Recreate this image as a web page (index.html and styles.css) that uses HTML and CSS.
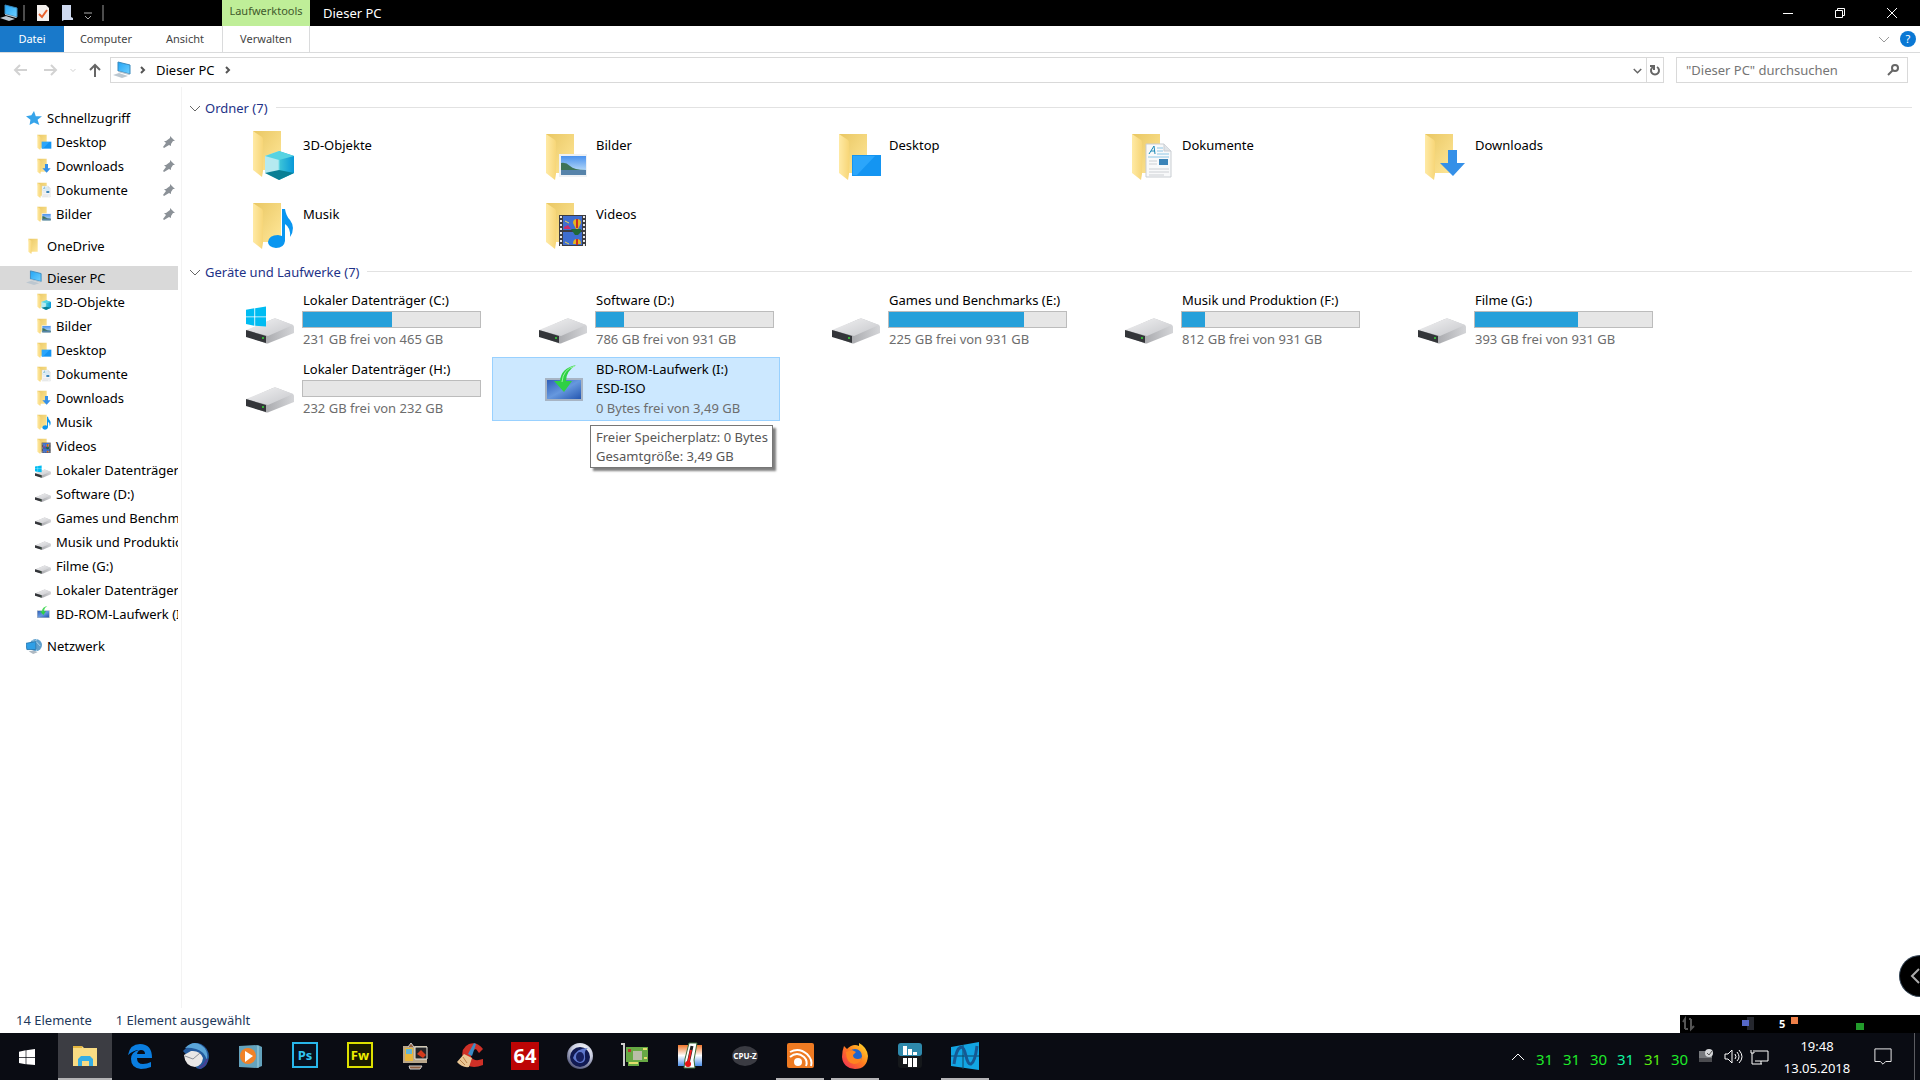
FILE: index.html
```
<!DOCTYPE html>
<html lang="de">
<head>
    <meta charset="UTF-8">
    <meta name="viewport" content="width=device-width, initial-scale=1.0">
    <title>Dieser PC</title>
    <link rel="stylesheet" href="styles.css">
</head>
<body>
    <!-- Shared icons -->
    <svg class="sprite" aria-hidden="true">
        <defs>
            <linearGradient id="gFolder" x1="0" y1="0" x2="1" y2="1">
                <stop offset="0" stop-color="#e9c763"/><stop offset="1" stop-color="#ffe799"/>
            </linearGradient>
            <linearGradient id="gFlap" x1="0" y1="0" x2="1" y2="0">
                <stop offset="0" stop-color="#ffeaa5"/><stop offset="1" stop-color="#f7d678"/>
            </linearGradient>
            <linearGradient id="gScreen" x1="0" y1="0" x2="1" y2="1">
                <stop offset="0" stop-color="#22a4f5"/><stop offset="1" stop-color="#6fd0ff"/>
            </linearGradient>
            <linearGradient id="gDrive" x1="0" y1="0" x2="1" y2="1">
                <stop offset="0" stop-color="#f2f2f3"/><stop offset="1" stop-color="#c6c7cb"/>
            </linearGradient>
            <linearGradient id="gSide" x1="0" y1="0" x2="1" y2="0">
                <stop offset="0" stop-color="#8c8d91"/><stop offset="1" stop-color="#d4d5d8"/>
            </linearGradient>
            <linearGradient id="gCube" x1="0" y1="0" x2="1" y2="0">
                <stop offset="0" stop-color="#3fc6d8"/><stop offset="1" stop-color="#0898d8"/>
            </linearGradient>
            <linearGradient id="gSky" x1="0" y1="0" x2="0" y2="1">
                <stop offset="0" stop-color="#4a92ee"/><stop offset="1" stop-color="#d3ecfb"/>
            </linearGradient>
            <linearGradient id="gBlue" x1="0" y1="0" x2="1" y2="1">
                <stop offset="0" stop-color="#2f5fb8"/><stop offset="0.5" stop-color="#6698de"/><stop offset="1" stop-color="#2456b0"/>
            </linearGradient>
            <linearGradient id="gFire" x1="0" y1="1" x2="1" y2="0">
                <stop offset="0" stop-color="#f0255c"/><stop offset="0.5" stop-color="#ff7a1f"/><stop offset="1" stop-color="#ffe52a"/>
            </linearGradient>
            <linearGradient id="gTemp" x1="0" y1="0" x2="0" y2="1">
                <stop offset="0" stop-color="#f0752a"/><stop offset="0.5" stop-color="#fff"/><stop offset="1" stop-color="#4a8ee8"/>
            </linearGradient>
            <radialGradient id="gOrb" cx="0.6" cy="0.3" r="0.8">
                <stop offset="0" stop-color="#fff"/><stop offset="0.5" stop-color="#c9cde0"/><stop offset="1" stop-color="#30355c"/>
            </radialGradient>
        </defs>

        <symbol id="folder" viewBox="0 0 48 48">
            <path d="M7 2h28v39H15z" fill="url(#gFolder)"/>
            <path d="M7 2l9 6q1 1 1 3v31l-1 6-9-7z" fill="url(#gFlap)"/>
        </symbol>
        <symbol id="objects" viewBox="0 0 48 48">
            <use href="#folder" y="-3" width="48" height="48"/>
            <path d="M19 24l14-5v29l-14-7z" fill="#b5eaf0"/>
            <path d="M33 19l15 5v17l-15 7z" fill="url(#gCube)"/>
            <path d="M19 24l14-5 15 5-15 4z" fill="#56d3e2"/>
            <path d="M19 41l14-3 15 3-15 7z" fill="#087f95"/>
            <path d="M33 28v10" stroke="#7ae0ea"/>
        </symbol>
        <symbol id="pictures" viewBox="0 0 48 48">
            <use href="#folder"/>
            <path d="M20 22h28v23H20z" fill="#eef1f4"/>
            <path d="M22 24h25v19H22z" fill="url(#gSky)"/>
            <path d="M22 31q5-1 9 3t16 4v5H22z" fill="#3d7358"/>
            <path d="M22 38h25v5H22z" fill="#5683aa"/>
        </symbol>
        <symbol id="desktop" viewBox="0 0 48 48">
            <use href="#folder"/>
            <path d="M20 23h29v21H20z" fill="#1495f2"/>
            <path d="M21 24h22L25 43h-4z" fill="#2ba6fb"/>
        </symbol>
        <symbol id="documents" viewBox="0 0 48 48">
            <use href="#folder"/>
            <path d="M21 12h18l7 7v26H21z" fill="#f8f9fa" stroke="#c9cdd2"/>
            <path d="M39 12v7h7" fill="#e0e4e8" stroke="#c9cdd2"/>
            <path d="M24 22l5-8 1 8m-4-3h4" fill="none" stroke="#1c8ab8"/>
            <path d="M32 16h6m-6 3h6m-6 3h12m-21 3h21" stroke="#8cc6e6"/>
            <path d="M24 29h8m-8 3h8m-8 5h20m-20 3h20m-20 3h15" stroke="#cdd0d4"/>
            <path d="M34 27h9v6h-9z" fill="#3b84b8"/>
        </symbol>
        <symbol id="downloads" viewBox="0 0 48 48">
            <use href="#folder"/>
            <path d="M30 18h9v13h8L35 44 22 31h8z" fill="#3590e8"/>
        </symbol>
        <symbol id="music" viewBox="0 0 48 48">
            <use href="#folder"/>
            <path d="M36 8h3q1 7 5 11 6 8 0 17 1-9-5-13v17q-1 7-9 7-8-1-8-6 1-7 10-7l4 1z" fill="#0a96f0"/>
        </symbol>
        <symbol id="videos" viewBox="0 0 48 48">
            <use href="#folder"/>
            <path d="M20 14h27v31H20z" fill="#3c3c42"/>
            <path d="M24 15h19v14H24zm0 16h19v13H24z" fill="#3f6ed0"/>
            <path d="M22 15v30M45 15v30" stroke="#e8e8e8" stroke-width="2" stroke-dasharray="2 2"/>
            <path d="M34 22q0-4 4-4t4 4l-3 6h-2zM34 43q0-5 4-5t4 5z" fill="#e3b41e"/>
            <path d="M37 18h2v9h-2zM37 38h2v6h-2z" fill="#cc2d1f"/>
            <path d="M25 26l4-2 3 4h-7z" fill="#c92f6c"/><path d="M26 20l4 2m-4 19l4 2" stroke="#efd44c"/>
            <path d="M32 28h10v3l-3 3h-3z" fill="#206836"/>
        </symbol>
        <symbol id="drive" viewBox="0 0 48 48">
            <path d="M0 35l27-12q2-1 4 0l16 6q1 1 1 2v6L23 47q-2 1-4 0L0 40z" fill="url(#gSide)"/>
            <path d="M0 34l27-11q2-1 4 0l16 6-25 11z" fill="url(#gDrive)"/>
            <path d="M0 34l20 6v7L0 41z" fill="#333539"/>
            <circle cx="17" cy="42" r="1" fill="#37dc37"/>
        </symbol>
        <symbol id="winlogo" viewBox="0 0 24 24">
            <path d="M0 4l10-2v10H0zM11 2l13-2v12H11zM0 13h10v10L0 21zM11 13h13v11l-13-1z"/>
        </symbol>
        <symbol id="system" viewBox="0 0 48 48">
            <use href="#drive"/>
            <use href="#winlogo" x="0" y="9" width="20" height="23" fill="#00bcf2"/>
        </symbol>
        <symbol id="disc" viewBox="0 0 48 48">
            <path d="M6 13h38v23H6z" fill="#a7b4c4"/>
            <path d="M8 15h34v19H8z" fill="url(#gBlue)"/>
            <path d="M37 0Q22 3 21 16h-6l10 11 8-11h-6Q27 6 37 0z" fill="#2fd044"/>
            <path d="M36 1Q24 4 23 17" fill="none" stroke="#9bf5a0"/>
        </symbol>
        <symbol id="pc" viewBox="0 0 18 18">
            <path d="M5 1l12 3v9L5 10z" fill="url(#gScreen)" stroke="#3989bd"/>
            <path d="M5 10l12 3-1 1-11-3zM0 14l6-2 9 3-6 2z" fill="#bcc7d0"/>
        </symbol>
        <symbol id="star" viewBox="0 0 18 18">
            <path d="M9 1l2 6 7 0-5 4 2 6-6-3-5 3 1-6-5-4 6-1z" fill="#36a4ea"/>
        </symbol>
        <symbol id="pin" viewBox="0 0 12 12">
            <path d="M7 0l5 5-2 0-2 3v2L6 9 1 12 0 11l3-4-2-2h2l4-3z" fill="#8b9197"/>
        </symbol>
        <symbol id="network" viewBox="0 0 18 18">
            <circle cx="11" cy="8" r="7" fill="#5f9fcc"/>
            <path d="M7 3q5 0 9 6M12 1q-4 7 0 14" stroke="#b7dbef" fill="none"/>
            <path d="M0 6l11-2v9L1 13z" fill="#2f9fe6" stroke="#2779b0"/>
            <path d="M3 15l5 3 5-2-4-2z" fill="#aeb9c2"/>
        </symbol>
        <symbol id="down" viewBox="0 0 12 12"><path d="M1 4l5 5 5-5"/></symbol>
        <symbol id="right" viewBox="0 0 12 12"><path d="M4 3l3 3-3 3"/></symbol>
    </svg>

    <header class="titlebar">
        <div class="quick-access">
            <svg class="icon-pc"><use href="#pc"/></svg>
            <i class="separator"></i>
            <button class="quick-button" aria-label="Eigenschaften">
                <svg viewBox="0 0 12 16"><path d="M0 0h9l3 3v13H0z" fill="#f4f0ee"/><path d="M2 9l3 3 5-7" fill="none" stroke="#e8602c" stroke-width="2"/></svg>
            </button>
            <button class="quick-button" aria-label="Neuer Ordner">
                <svg viewBox="0 0 12 16"><path d="M1 0h9v12l2 1v2H3l-2 1z" fill="#cfdaf0"/></svg>
            </button>
            <button class="quick-button customize" aria-label="Anpassen">
                <svg class="line" viewBox="0 0 12 16"><path d="M2 8h8M3 11l3 3 3-3"/></svg>
            </button>
            <i class="separator"></i>
        </div>
        <div class="tool-tab">Laufwerktools</div>
        <h1 class="window-title">Dieser PC</h1>
        <div class="window-controls">
            <button aria-label="Minimieren"><svg class="line" viewBox="0 0 12 12"><path d="M1 6.500h10"/></svg></button>
            <button aria-label="Verkleinern"><svg class="line" viewBox="0 0 12 12"><path d="M1.500 3.500h7v7h-7zM3.500 3V1.500h7v7H9"/></svg></button>
            <button aria-label="Schließen"><svg class="line" viewBox="0 0 12 12"><path d="M1 1l10 10M11 1L1 11"/></svg></button>
        </div>
    </header>

    <nav class="ribbon">
        <button class="tab file-tab">Datei</button>
        <button class="tab computer-tab">Computer</button>
        <button class="tab view-tab">Ansicht</button>
        <button class="tab manage-tab">Verwalten</button>
        <button class="ribbon-toggle" aria-label="Menüband erweitern"><svg class="line"><use href="#down"/></svg></button>
        <button class="help" aria-label="Hilfe">?</button>
    </nav>

    <div class="address-row">
        <button class="nav-button disabled" aria-label="Zurück"><svg class="line" viewBox="0 0 14 14"><path d="M13 7H2M6 2L1 7l5 5"/></svg></button>
        <button class="nav-button disabled" aria-label="Vorwärts"><svg class="line" viewBox="0 0 14 14"><path d="M1 7h11M8 2l5 5-5 5"/></svg></button>
        <button class="nav-button recent disabled" aria-label="Zuletzt besucht"><svg class="line"><use href="#down"/></svg></button>
        <button class="nav-button up" aria-label="Nach oben"><svg class="line" viewBox="0 0 14 14"><path d="M7 14V2M2 7l5-5 5 5"/></svg></button>
        <div class="address">
            <svg class="icon-pc"><use href="#pc"/></svg>
            <svg class="crumb-arrow line"><use href="#right"/></svg>
            <a class="crumb" href="#">Dieser PC</a>
            <svg class="crumb-arrow line"><use href="#right"/></svg>
            <button class="address-drop" aria-label="Verlauf"><svg class="line"><use href="#down"/></svg></button>
            <button class="refresh" aria-label="Aktualisieren"><svg class="line" viewBox="0 0 12 12"><path d="M8 3a4 4 0 1 1-4 0M1 2h4v4"/></svg></button>
        </div>
        <div class="search">
            <input type="text" placeholder='"Dieser PC" durchsuchen' aria-label="Dieser PC durchsuchen">
            <svg class="line" viewBox="0 0 12 12"><circle cx="8" cy="4" r="3"/><path d="M6 6l-5 5"/></svg>
        </div>
    </div>

    <div class="explorer">
        <nav class="sidebar">
            <ul>
                <li><a href="#"><svg><use href="#star"/></svg>Schnellzugriff</a></li>
                <li class="sub pinned"><a href="#"><svg><use href="#desktop"/></svg>Desktop</a><svg class="pin"><use href="#pin"/></svg></li>
                <li class="sub pinned"><a href="#"><svg><use href="#downloads"/></svg>Downloads</a><svg class="pin"><use href="#pin"/></svg></li>
                <li class="sub pinned"><a href="#"><svg><use href="#documents"/></svg>Dokumente</a><svg class="pin"><use href="#pin"/></svg></li>
                <li class="sub pinned"><a href="#"><svg><use href="#pictures"/></svg>Bilder</a><svg class="pin"><use href="#pin"/></svg></li>
            </ul>
            <ul>
                <li><a href="#"><svg><use href="#folder"/></svg>OneDrive</a></li>
            </ul>
            <ul>
                <li class="current"><a href="#"><svg><use href="#pc"/></svg>Dieser PC</a></li>
                <li class="sub"><a href="#"><svg><use href="#objects"/></svg>3D-Objekte</a></li>
                <li class="sub"><a href="#"><svg><use href="#pictures"/></svg>Bilder</a></li>
                <li class="sub"><a href="#"><svg><use href="#desktop"/></svg>Desktop</a></li>
                <li class="sub"><a href="#"><svg><use href="#documents"/></svg>Dokumente</a></li>
                <li class="sub"><a href="#"><svg><use href="#downloads"/></svg>Downloads</a></li>
                <li class="sub"><a href="#"><svg><use href="#music"/></svg>Musik</a></li>
                <li class="sub"><a href="#"><svg><use href="#videos"/></svg>Videos</a></li>
                <li class="sub"><a href="#"><svg><use href="#system"/></svg>Lokaler Datenträger (C:)</a></li>
                <li class="sub"><a href="#"><svg><use href="#drive"/></svg>Software (D:)</a></li>
                <li class="sub"><a href="#"><svg><use href="#drive"/></svg>Games und Benchmarks (E:)</a></li>
                <li class="sub"><a href="#"><svg><use href="#drive"/></svg>Musik und Produktion (F:)</a></li>
                <li class="sub"><a href="#"><svg><use href="#drive"/></svg>Filme (G:)</a></li>
                <li class="sub"><a href="#"><svg><use href="#drive"/></svg>Lokaler Datenträger (H:)</a></li>
                <li class="sub"><a href="#"><svg><use href="#disc"/></svg>BD-ROM-Laufwerk (I:)</a></li>
            </ul>
            <ul>
                <li><a href="#"><svg><use href="#network"/></svg>Netzwerk</a></li>
            </ul>
        </nav>

        <main class="content">
            <h2 class="group"><svg class="line"><use href="#down"/></svg>Ordner (7)</h2>
            <div class="tiles folders">
                <div class="tile"><svg class="tile-icon"><use href="#objects"/></svg><p>3D-Objekte</p></div>
                <div class="tile"><svg class="tile-icon"><use href="#pictures"/></svg><p>Bilder</p></div>
                <div class="tile"><svg class="tile-icon"><use href="#desktop"/></svg><p>Desktop</p></div>
                <div class="tile"><svg class="tile-icon"><use href="#documents"/></svg><p>Dokumente</p></div>
                <div class="tile"><svg class="tile-icon"><use href="#downloads"/></svg><p>Downloads</p></div>
                <div class="tile"><svg class="tile-icon"><use href="#music"/></svg><p>Musik</p></div>
                <div class="tile"><svg class="tile-icon"><use href="#videos"/></svg><p>Videos</p></div>
            </div>

            <h2 class="group"><svg class="line"><use href="#down"/></svg>Geräte und Laufwerke (7)</h2>
            <div class="tiles">
                <div class="tile">
                    <svg class="tile-icon"><use href="#system"/></svg>
                    <div class="info"><p>Lokaler Datenträger (C:)</p><div class="bar"><span style="width: 50%"></span></div><p class="free">231 GB frei von 465 GB</p></div>
                </div>
                <div class="tile">
                    <svg class="tile-icon"><use href="#drive"/></svg>
                    <div class="info"><p>Software (D:)</p><div class="bar"><span style="width: 16%"></span></div><p class="free">786 GB frei von 931 GB</p></div>
                </div>
                <div class="tile">
                    <svg class="tile-icon"><use href="#drive"/></svg>
                    <div class="info"><p>Games und Benchmarks (E:)</p><div class="bar"><span style="width: 76%"></span></div><p class="free">225 GB frei von 931 GB</p></div>
                </div>
                <div class="tile">
                    <svg class="tile-icon"><use href="#drive"/></svg>
                    <div class="info"><p>Musik und Produktion (F:)</p><div class="bar"><span style="width: 13%"></span></div><p class="free">812 GB frei von 931 GB</p></div>
                </div>
                <div class="tile">
                    <svg class="tile-icon"><use href="#drive"/></svg>
                    <div class="info"><p>Filme (G:)</p><div class="bar"><span style="width: 58%"></span></div><p class="free">393 GB frei von 931 GB</p></div>
                </div>
                <div class="tile">
                    <svg class="tile-icon"><use href="#drive"/></svg>
                    <div class="info"><p>Lokaler Datenträger (H:)</p><div class="bar"><span style="width: 0%"></span></div><p class="free">232 GB frei von 232 GB</p></div>
                </div>
                <div class="tile selected">
                    <svg class="tile-icon"><use href="#disc"/></svg>
                    <div class="info"><p>BD-ROM-Laufwerk (I:)</p><p class="label">ESD-ISO</p><p class="free">0 Bytes frei von 3,49 GB</p></div>
                    <div class="tooltip" role="tooltip">Freier Speicherplatz: 0 Bytes<br>Gesamtgröße: 3,49 GB</div>
                </div>
            </div>
        </main>
    </div>

    <footer class="statusbar">
        <span>14 Elemente</span>
        <span>1 Element ausgewählt</span>
    </footer>

    <button class="side-handle" aria-label="Öffnen"><svg class="line" viewBox="0 0 12 24"><path d="M11 5l-7 7 7 7"/></svg></button>
    <div class="gadget">
        <svg viewBox="0 0 240 18">
            <path d="M5 14V4L3 7M5 14h3M11 4v10l3-3M9 4h2" fill="none" stroke="#555" stroke-width="2"/>
            <path d="M67 2h7v13h-7z" fill="#25272e"/><path d="M62 5h7v6h-7z" fill="#5668c8"/>
            <text x="99" y="13">5</text>
            <path d="M111 2h7v7h-7z" fill="#ef8049"/><path d="M176 8h8v7h-8z" fill="#229b2b"/>
        </svg>
    </div>

    <div class="taskbar">
        <button class="start" aria-label="Start"><svg viewBox="0 0 24 24"><use href="#winlogo" fill="#fff"/></svg></button>
        <div class="apps">
            <button class="active" aria-label="Explorer"><svg viewBox="0 0 28 28">
                <path d="M2 4h9l2 2h13v18H2z" fill="#f9dc83"/><path d="M2 4h9v2H2z" fill="#e4b63f"/><path d="M7 24v-7l3-3h9l3 3v7h-4v-5h-7v5z" fill="#35aee4"/>
            </svg></button>
            <button aria-label="Edge"><svg viewBox="0 0 28 28">
                <path d="M2 13Q4 2 14 2q12 0 12 14H11q0 6 6 6 4 0 8-2v5q-5 2-10 2Q5 26 5 17q0-7 8-9-5 0-11 5zm9-1h8q0-4-4-4-3 0-4 4z" fill="#0a7ee0"/>
            </svg></button>
            <button aria-label="Thunderbird"><svg viewBox="0 0 28 28">
                <path d="M2 9Q6 5 7 4q6-5 13-2 8 4 8 13-1 9-8 12-6 0-5-3z" fill="#245a9c"/><path d="M4 6Q12-2 20 3q8 5 6 15-3-9-11-11Q8 5 4 6z" fill="#5ba5d8"/>
                <path d="M3 13l7-4q9-1 12 7-1 8-8 9-10-1-11-12z" fill="#e9e7e6"/><path d="M4 14l8 3 7-6" fill="none" stroke="#8c9098"/><path d="M18 26q7-3 8-9" fill="none" stroke="#4a3f91" stroke-width="2"/>
            </svg></button>
            <button aria-label="Media Player"><svg viewBox="0 0 28 28">
                <path d="M3 4l19-1 4 2v19l-5 2-18-1z" fill="#64a3bd"/><path d="M22 4v22" stroke="#a4d4e3"/><circle cx="12" cy="14" r="8" fill="#f18228"/><path d="M9 9l8 5-8 6z" fill="#fff"/>
            </svg></button>
            <button aria-label="Photoshop"><svg viewBox="0 0 28 28">
                <path d="M2 1h24v24H2z" fill="#07101f" stroke="#28b7ec" stroke-width="2"/><text class="app-text" x="14" y="18" fill="#31c5f0">Ps</text>
            </svg></button>
            <button aria-label="Fireworks"><svg viewBox="0 0 28 28">
                <path d="M2 1h24v24H2z" fill="#181900" stroke="#dde000" stroke-width="2"/><text class="app-text" x="14" y="18" fill="#eff000">Fw</text>
            </svg></button>
            <button aria-label="Bilderrahmen"><svg viewBox="0 0 28 28">
                <path d="M2 4h24v17H2z" fill="#b9a78c"/><path d="M4 6h8v13H4z" fill="#e8b63b"/><path d="M14 5h12v12H14z" fill="#232326" stroke="#e8e8df"/>
                <path d="M5 7h6v5H5z" fill="#62b5d7"/><path d="M16 12l4-4 5 5-3 3z" fill="#d33a1c"/><path d="M7 5l3-4 3 4M8 24h13l-2 3H9z" fill="#8f5f40" stroke="#ccc"/>
            </svg></button>
            <button aria-label="CCleaner"><svg viewBox="0 0 28 28">
                <path d="M27 7Q21-1 13 2q-9 4-6 15 5 12 20 6v-6q-9 3-12-2-1-7 5-8l3 4z" fill="#cf3027"/>
                <path d="M18 1l2 1-4 12-4-2z" fill="#3b8cc5"/><path d="M8 12l8 4-3 9q-7 1-12-5z" fill="#eac694"/><path d="M4 18l5 5m-2-8l4 6" stroke="#b98249"/>
            </svg></button>
            <button aria-label="AIDA64"><svg viewBox="0 0 28 28">
                <path d="M0 0h28v28H0z" fill="#bd0505"/><text class="app-number" x="14" y="21">64</text>
            </svg></button>
            <button aria-label="Cinema 4D"><svg viewBox="0 0 28 28">
                <circle cx="14" cy="14" r="13" fill="url(#gOrb)"/><circle cx="14" cy="15" r="10" fill="#111a52"/><path d="M7 16Q10 6 22 6q-4 2-3 8t-4 7q-5 0-8-5z" fill="#5f78cd"/><ellipse cx="14" cy="15" rx="4" ry="5" fill="#17205f"/>
            </svg></button>
            <button aria-label="GPU-Z"><svg viewBox="0 0 28 28">
                <path d="M0 2h3v22" fill="none" stroke="#ccc" stroke-width="2"/><path d="M5 5h22v15H18v4H7v-4H5z" fill="#67a944"/><path d="M12 9h9v9h-9z" fill="#b9bda8"/>
                <path d="M7 7h3v3H7z" fill="#b5382c"/><path d="M8 21h9m5-14h4m-3 9h3" stroke="#e3dd6b" stroke-width="2"/>
            </svg></button>
            <button aria-label="Temperatur"><svg viewBox="0 0 28 28">
                <path d="M2 3h24v21H2z" fill="url(#gTemp)"/><path d="M13 1h8l-3 17 1 8H8l1-9z" fill="#fff" stroke="#3a6b37"/><path d="M16 4l-4 18" stroke="#222" stroke-width="3"/><path d="M15 8l-3 14" stroke="#f22020" stroke-width="2"/><circle cx="12" cy="22" r="3" fill="#e21515"/>
            </svg></button>
            <button aria-label="CPU-Z"><svg viewBox="0 0 28 28">
                <ellipse cx="14" cy="14" rx="13" ry="10" fill="#3a3b42"/><text class="app-small" x="14" y="17">CPU-Z</text>
            </svg></button>
            <button class="running" aria-label="RSS"><svg viewBox="0 0 28 28">
                <rect x="1" y="1" width="27" height="25" rx="2" fill="#ee7a22"/><circle cx="12" cy="20" r="4" fill="#fff"/><path d="M4 15q7-6 14 0 4 4 2 9M4 10q9-5 17 2 6 6 4 12" fill="none" stroke="#fff" stroke-width="2"/>
            </svg></button>
            <button class="running" aria-label="Firefox"><svg viewBox="0 0 28 28">
                <path d="M3 4l3 3q4-4 8-4 2 0 4 1V1q8 4 9 13-1 13-13 13Q2 26 1 15 1 9 3 4z" fill="url(#gFire)"/><circle cx="14" cy="14" r="7" fill="#1e64cc"/><path d="M5 10l6-2 4 2-3 3q0 4 5 4 3 0 4-2-1 7-8 7-8-1-8-12z" fill="#ff8420"/>
            </svg></button>
            <button aria-label="Hardware"><svg viewBox="0 0 28 28">
                <rect x="2" y="1" width="24" height="13" rx="3" fill="#2e89ac"/><path d="M2 14h24v9q0 3-3 3H5q-3 0-3-3z" fill="#15181b"/><path d="M9 4v9M14 7v6M19 10v3M9 16v6M14 16v9M19 16v9" stroke="#fff" stroke-width="4"/>
            </svg></button>
            <button class="running" aria-label="Monitor"><svg viewBox="0 0 28 28">
                <path d="M0 5l28-5v28L0 24z" fill="#12a5e3"/><path d="M12 3v24M0 14h28" stroke="#0c4667"/><path d="M3 22Q5 7 10 5q3 0 5 9t5 8q4-2 6-18" fill="none" stroke="#165993" stroke-width="3"/>
            </svg></button>
        </div>
        <div class="tray">
            <button class="tray-up" aria-label="Ausgeblendete Symbole"><svg class="line" viewBox="0 0 14 14"><path d="M1 10l6-6 6 6"/></svg></button>
            <span class="temp">31</span>
            <span class="temp">31</span>
            <span class="temp">30</span>
            <span class="temp teal">31</span>
            <span class="temp lime">31</span>
            <span class="temp">30</span>
            <svg class="tray-icon" viewBox="0 0 18 18"><path d="M2 3h10v5h3v6H2z" fill="#77797d"/><path d="M2 10h13v4H2z" fill="#4b4c50"/><circle cx="12" cy="5" r="4" fill="#d4d6d8"/><path d="M10 5l2 2 3-4" fill="none" stroke="#555"/></svg>
            <svg class="tray-icon line" viewBox="0 0 18 18"><path d="M1 6h3l4-4v13l-4-4H1zM11 6q2 3 0 5M13 4q4 5 0 9M15 2q6 7 0 13"/></svg>
            <svg class="tray-icon line" viewBox="0 0 18 18"><path d="M5 3h13v10H5M1 2v3h3V2M2 5v11h10M11 13v3"/></svg>
            <div class="clock"><time>19:48</time><time>13.05.2018</time></div>
            <button class="notifications" aria-label="Info-Center"><svg class="line" viewBox="0 0 20 20"><path d="M1 1h18v14h-6l-3 3-3-3H1z"/></svg></button>
            <i class="show-desktop"></i>
        </div>
    </div>
</body>
</html>
```
FILE: styles.css
```
* {
    box-sizing: border-box;
}

body {
    margin: 0;
    min-height: 100vh;
    display: flex;
    flex-direction: column;
    position: relative;
    font-family: 'Noto Sans', 'Open Sans', sans-serif;
    font-size: 13px;
    line-height: 20px;
    color: #000;
    background-color: #fff;
    overflow-x: hidden;
}

h1, h2, p, ul {
    margin: 0;
    padding: 0;
    font-size: 13px;
    font-weight: normal;
}

ul {
    list-style: none;
}

a {
    color: inherit;
    text-decoration: none;
}

button {
    display: flex;
    align-items: center;
    justify-content: center;
    padding: 0;
    border: none;
    background: none;
    color: inherit;
    font: inherit;
}

svg {
    flex: none;
    width: 12px;
    height: 12px;
    overflow: visible;
}

symbol {
    overflow: visible;
}

.sprite {
    position: absolute;
    width: 0;
    height: 0;
}

.line {
    fill: none;
    stroke: currentColor;
}

.icon-pc {
    width: 18px;
    height: 18px;
}

/* Title bar */
.titlebar {
    display: flex;
    height: 26px;
    color: #fff;
    background-color: #000;
}

.quick-access {
    display: flex;
    align-items: center;
    width: 222px;
}

.separator {
    width: 2px;
    height: 16px;
    margin: 0 6px 0 5px;
    background-color: #4c4c4c;
}

.quick-button {
    width: 24px;
    height: 24px;
}

.quick-button svg {
    height: 16px;
}

.customize {
    width: 18px;
    color: #aaa;
}

.tool-tab {
    width: 88px;
    text-align: center;
    font-size: 11px;
    line-height: 22px;
    color: #3f5a2c;
    background-color: #bfee98;
}

.window-title {
    padding-left: 13px;
    font-size: 13px;
    line-height: 26px;
}

.window-controls {
    display: flex;
    margin-left: auto;
    padding-right: 2px;
}

.window-controls button {
    width: 52px;
}

/* Ribbon */
.ribbon {
    display: flex;
    align-items: center;
    height: 27px;
    padding-right: 4px;
    border-bottom: 1px solid #dadbdc;
    font-size: 11px;
    color: #444;
}

.tab {
    height: 26px;
}

.file-tab {
    width: 64px;
    color: #fff;
    background-color: #1979ca;
}

.computer-tab {
    width: 84px;
}

.view-tab {
    width: 74px;
}

.manage-tab {
    width: 88px;
    border: 1px solid #dadbdc;
    border-width: 0 1px;
}

.ribbon-toggle {
    margin-left: auto;
    color: #999;
}

.help {
    width: 16px;
    height: 16px;
    margin-left: 10px;
    border-radius: 50%;
    color: #fff;
    background-color: #0a78d4;
}

/* Address row */
.address-row {
    display: flex;
    align-items: center;
    padding: 4px 12px 4px 6px;
}

.nav-button {
    width: 29px;
    height: 26px;
    color: #666;
}

.nav-button svg {
    width: 14px;
    height: 14px;
    stroke-width: 2;
}

.nav-button.disabled {
    color: #d2d2d2;
}

.nav-button.recent {
    width: 18px;
}

.nav-button.recent svg {
    width: 6px;
    height: 6px;
}

.nav-button.up {
    width: 28px;
    padding-right: 2px;
}

.address {
    display: flex;
    align-items: center;
    flex: 1;
    height: 26px;
    padding-left: 2px;
    border: 1px solid #d9d9d9;
}

.crumb-arrow {
    margin: 0 6px;
    color: #555;
    stroke-width: 2;
}

.crumb {
    margin: 0 1px;
}

.address-drop {
    width: 18px;
    height: 24px;
    margin-left: auto;
    color: #666;
}

.address-drop svg {
    width: 9px;
    height: 9px;
    stroke-width: 2;
}

.refresh {
    width: 17px;
    height: 24px;
    border-left: 1px solid #d9d9d9;
    color: #666;
}

.refresh svg {
    stroke-width: 2;
}

.search {
    display: flex;
    align-items: center;
    width: 232px;
    height: 26px;
    margin-left: 12px;
    padding: 0 8px 0 9px;
    border: 1px solid #d9d9d9;
    color: #666;
}

.search input {
    flex: 1;
    min-width: 0;
    padding: 0;
    border: none;
    outline: none;
    background: none;
    font: inherit;
}

.search input::placeholder {
    color: #757575;
}

.search svg {
    stroke-width: 2;
}

/* Main area */
.explorer {
    display: flex;
    flex: 1;
}

.sidebar {
    width: 182px;
    padding: 19px 3px 0 0;
    border-right: 1px solid #f3f3f3;
}

.sidebar ul {
    margin-bottom: 8px;
}

.sidebar li {
    display: flex;
    align-items: center;
    height: 24px;
    padding-left: 26px;
}

.sidebar a {
    display: flex;
    flex: 1;
    align-items: center;
    gap: 5px;
    min-width: 0;
    overflow: hidden;
    white-space: nowrap;
}

.sidebar a svg {
    width: 16px;
    height: 16px;
}

.sidebar .sub {
    padding-left: 35px;
}

.sidebar .current {
    background-color: #d9d9d9;
}

.sidebar .pin {
    margin-right: 3px;
}

.content {
    flex: 1;
    padding: 6px 8px 0 7px;
}

.group {
    display: flex;
    align-items: center;
    gap: 4px;
    height: 31px;
    padding-bottom: 2px;
    color: #1e3287;
}

.group svg {
    color: #666;
}

.group::after {
    content: '';
    flex: 1;
    height: 1px;
    margin-left: 4px;
    background-color: #e2e2e2;
}

.tiles {
    display: grid;
    grid-template-columns: repeat(auto-fill, 288px);
    gap: 5px;
    padding-left: 10px;
}

.tile {
    display: flex;
    gap: 8px;
    position: relative;
    height: 64px;
    padding: 1px 5px 0 46px;
    border: 1px solid transparent;
}

.tile.selected {
    border-color: #99d1ff;
    background-color: #cce8ff;
}

.tile p {
    padding-left: 1px;
}

.folders .tile p {
    padding-top: 9px;
}

.tile-icon {
    width: 48px;
    height: 48px;
    margin-top: 6px;
}

.info {
    flex: 1;
}

.bar {
    height: 17px;
    margin: 1px 0;
    border: 1px solid #bcbcbc;
    background-color: #e6e6e6;
}

.bar span {
    display: block;
    height: 100%;
    background-color: #26a0da;
}

.label {
    height: 19px;
    line-height: 18px;
}

.free {
    color: #6d6d6d;
}

.tooltip {
    position: absolute;
    top: 67px;
    left: 97px;
    padding: 2px 4px 1px 5px;
    border: 1px solid #767676;
    line-height: 19px;
    white-space: nowrap;
    color: #575757;
    background-color: #fff;
    box-shadow: 3px 3px 2px rgba(0, 0, 0, 0.5);
}

.statusbar {
    display: flex;
    gap: 24px;
    height: 25px;
    padding: 2px 16px;
    color: #1e395b;
}

/* Things floating over the window */
.side-handle {
    position: absolute;
    right: 0;
    bottom: 83px;
    width: 21px;
    height: 42px;
    padding-left: 8px;
    border: 1px solid #345;
    border-right: none;
    border-radius: 21px 0 0 21px;
    color: #aaa;
    background-color: #000;
}

.side-handle svg {
    height: 24px;
    stroke-width: 2;
}

.gadget {
    position: absolute;
    right: 0;
    bottom: 47px;
    width: 240px;
    height: 18px;
    background-color: #000;
}

.gadget svg {
    width: 240px;
    height: 18px;
}

.gadget text {
    font-size: 11px;
    font-weight: bold;
    fill: #fff;
}

/* Taskbar */
.taskbar {
    display: flex;
    height: 47px;
    color: #fff;
    background-color: #0a0c13;
}

.start {
    width: 58px;
    padding-right: 4px;
}

.start svg {
    width: 16px;
    height: 16px;
}

.apps {
    display: flex;
    gap: 1px;
}

.apps button {
    width: 54px;
    border-bottom: 2px solid transparent;
}

.apps svg {
    width: 28px;
    height: 28px;
}

.apps .running {
    border-image: linear-gradient(to right, transparent 5px, #b4b4b6 5px, #b4b4b6 49px, transparent 49px) 2;
}

.apps .active {
    border-color: #b4b4b6;
    background-color: #3c3d43;
}

.app-text {
    font-size: 13px;
    font-weight: bold;
    text-anchor: middle;
}

.app-number {
    font-size: 20px;
    font-weight: bold;
    text-anchor: middle;
    fill: #fff;
}

.app-small {
    font-size: 8px;
    font-weight: bold;
    text-anchor: middle;
    fill: #fff;
}

.tray {
    display: flex;
    align-items: center;
    margin-left: auto;
}

.tray-up {
    width: 26px;
    height: 47px;
}

.tray-up svg {
    width: 14px;
    height: 14px;
}

.temp {
    width: 27px;
    padding-top: 5px;
    text-align: center;
    font-size: 15px;
    color: #1fe92a;
}

.temp.teal {
    color: #10f6a0;
}

.temp.lime {
    color: #5aec10;
}

.tray-icon {
    width: 18px;
    height: 18px;
    margin: 0 5px 0 4px;
}

.tray-icon + .tray-icon {
    margin-right: 4px;
}

.clock {
    display: flex;
    flex-direction: column;
    width: 90px;
    text-align: center;
    line-height: 22px;
}

.notifications {
    width: 42px;
    height: 47px;
}

.notifications svg {
    width: 18px;
    height: 18px;
}

.show-desktop {
    width: 6px;
    height: 47px;
    margin-left: 10px;
    border-left: 1px solid #5b5c61;
}
```
